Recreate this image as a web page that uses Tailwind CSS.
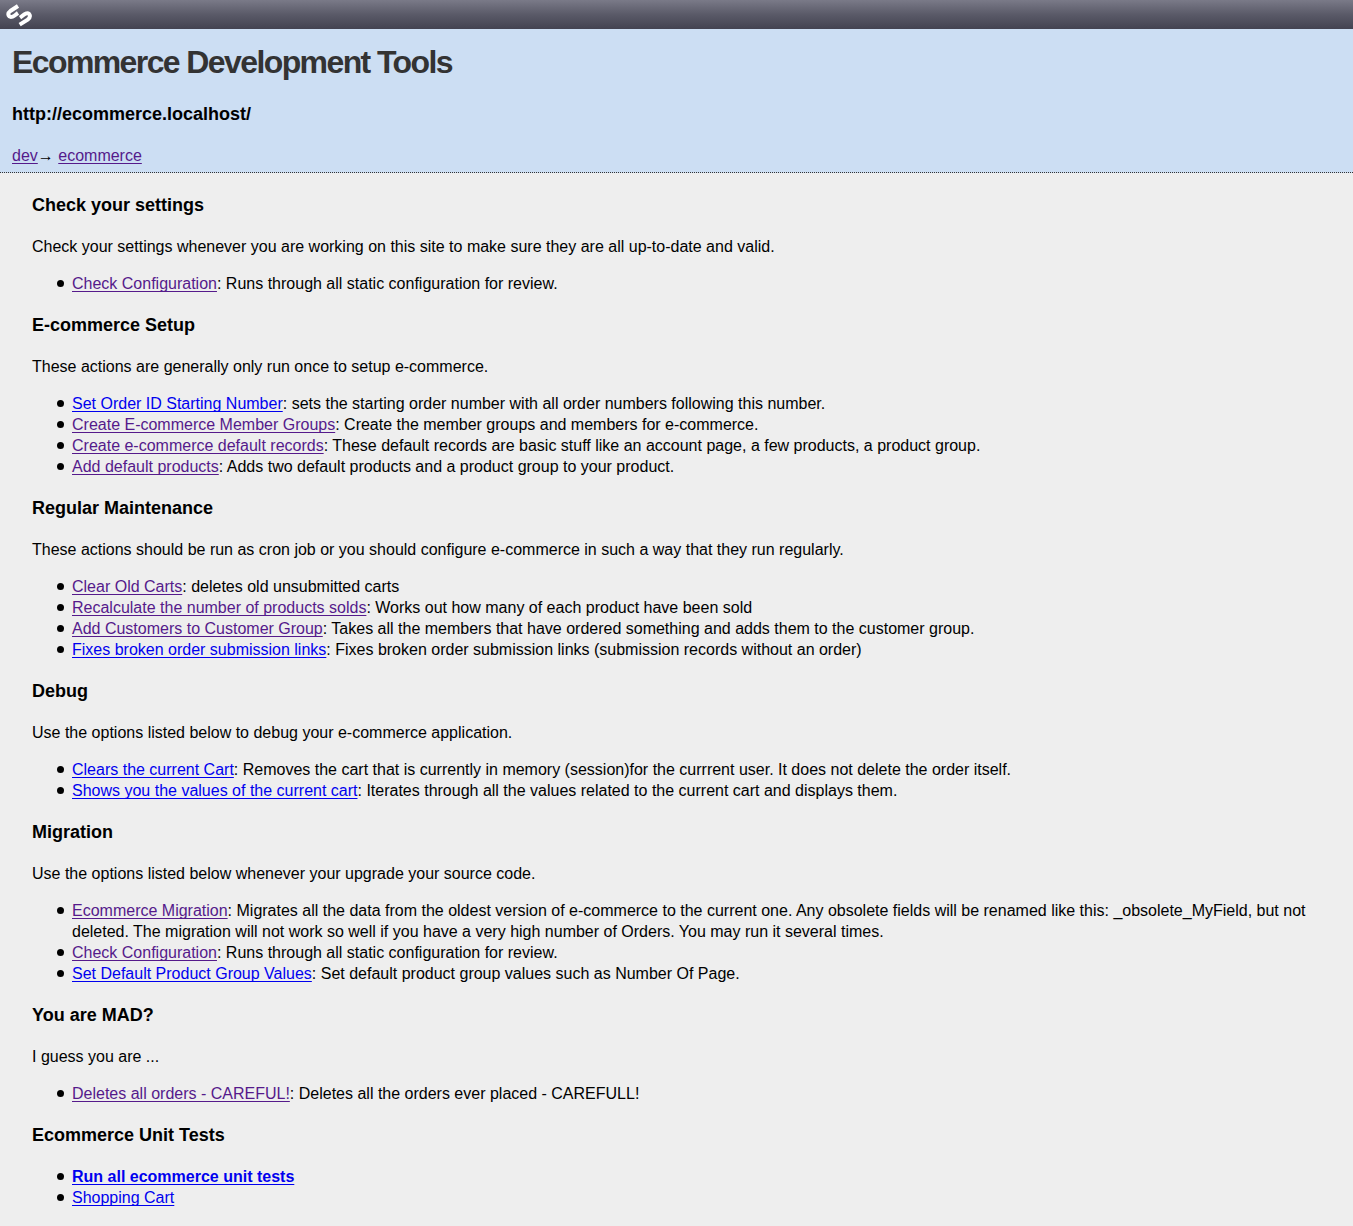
<!DOCTYPE html>
<html lang="en">
<head>
<meta charset="utf-8">
<meta name="viewport" content="width=device-width, initial-scale=1">
<title>Ecommerce Development Tools</title>
<script src="https://cdn.jsdelivr.net/npm/@tailwindcss/browser@4"></script>
</head>
<body class="min-h-screen bg-[#eeeeee] font-['Liberation_Sans',Arial,sans-serif] text-base leading-[21px] text-black [text-decoration-skip-ink:none]">
<div class="flex h-[29px] items-center bg-linear-to-b from-[#7a7a88] via-[#5a5a68] to-[#434351] pl-[6px]">
  <svg class="h-[29px] w-[27px]" viewBox="18 0 81 87" fill="none" stroke="#fff" stroke-width="12" aria-label="SilverStripe">
    <path d="M54 18L31 33C20 41 26 54 38 50C44 48 48 43 54 39"/>
    <path d="M59 74L83 59C95 50 89 36 77 41C71 43 67 48 60 53"/>
  </svg>
</div>
<header class="border-b border-dotted border-[#333333] bg-[#ccdef3] px-3 pt-3 pb-[6px]">
  <h1 class="text-[32px] leading-[42px] font-bold tracking-tighter text-[#333333]">Ecommerce Development Tools</h1>
  <h3 class="my-[19px] text-lg leading-6 font-bold">http://ecommerce.localhost/</h3>
  <p><a href="#" class="text-[#551a8b] underline underline-offset-2">dev</a>→ <a href="#" class="text-[#551a8b] underline underline-offset-2">ecommerce</a></p>
</header>
<main class="flex flex-col gap-[19px] px-8 pt-5 pb-4">
  <section>
    <h3 class="mb-[19px] text-lg leading-6 font-bold">Check your settings</h3>
    <p class="mb-4">Check your settings whenever you are working on this site to make sure they are all up-to-date and valid.</p>
    <ul class="pl-10 *:before:float-left *:before:mt-[7px] *:before:-ml-[15px] *:before:size-[7px] *:before:rounded-full *:before:bg-black *:before:content-['']">
      <li><a href="#" class="text-[#551a8b] underline underline-offset-2">Check Configuration</a>: Runs through all static configuration for review.</li>
    </ul>
  </section>
  <section>
    <h3 class="mb-[19px] text-lg leading-6 font-bold">E-commerce Setup</h3>
    <p class="mb-4">These actions are generally only run once to setup e-commerce.</p>
    <ul class="pl-10 *:before:float-left *:before:mt-[7px] *:before:-ml-[15px] *:before:size-[7px] *:before:rounded-full *:before:bg-black *:before:content-['']">
      <li><a href="#" class="text-[#0000ee] underline underline-offset-2">Set Order ID Starting Number</a>: sets the starting order number with all order numbers following this number.</li>
      <li><a href="#" class="text-[#551a8b] underline underline-offset-2">Create E-commerce Member Groups</a>: Create the member groups and members for e-commerce.</li>
      <li><a href="#" class="text-[#551a8b] underline underline-offset-2">Create e-commerce default records</a>: These default records are basic stuff like an account page, a few products, a product group.</li>
      <li><a href="#" class="text-[#551a8b] underline underline-offset-2">Add default products</a>: Adds two default products and a product group to your product.</li>
    </ul>
  </section>
  <section>
    <h3 class="mb-[19px] text-lg leading-6 font-bold">Regular Maintenance</h3>
    <p class="mb-4">These actions should be run as cron job or you should configure e-commerce in such a way that they run regularly.</p>
    <ul class="pl-10 *:before:float-left *:before:mt-[7px] *:before:-ml-[15px] *:before:size-[7px] *:before:rounded-full *:before:bg-black *:before:content-['']">
      <li><a href="#" class="text-[#551a8b] underline underline-offset-2">Clear Old Carts</a>: deletes old unsubmitted carts</li>
      <li><a href="#" class="text-[#551a8b] underline underline-offset-2">Recalculate the number of products solds</a>: Works out how many of each product have been sold</li>
      <li><a href="#" class="text-[#551a8b] underline underline-offset-2">Add Customers to Customer Group</a>: Takes all the members that have ordered something and adds them to the customer group.</li>
      <li><a href="#" class="text-[#0000ee] underline underline-offset-2">Fixes broken order submission links</a>: Fixes broken order submission links (submission records without an order)</li>
    </ul>
  </section>
  <section>
    <h3 class="mb-[19px] text-lg leading-6 font-bold">Debug</h3>
    <p class="mb-4">Use the options listed below to debug your e-commerce application.</p>
    <ul class="pl-10 *:before:float-left *:before:mt-[7px] *:before:-ml-[15px] *:before:size-[7px] *:before:rounded-full *:before:bg-black *:before:content-['']">
      <li><a href="#" class="text-[#0000ee] underline underline-offset-2">Clears the current Cart</a>: Removes the cart that is currently in memory (session)for the currrent user. It does not delete the order itself.</li>
      <li><a href="#" class="text-[#0000ee] underline underline-offset-2">Shows you the values of the current cart</a>: Iterates through all the values related to the current cart and displays them.</li>
    </ul>
  </section>
  <section>
    <h3 class="mb-[19px] text-lg leading-6 font-bold">Migration</h3>
    <p class="mb-4">Use the options listed below whenever your upgrade your source code.</p>
    <ul class="pl-10 *:before:float-left *:before:mt-[7px] *:before:-ml-[15px] *:before:size-[7px] *:before:rounded-full *:before:bg-black *:before:content-['']">
      <li><a href="#" class="text-[#551a8b] underline underline-offset-2">Ecommerce Migration</a>: Migrates all the data from the oldest version of e-commerce to the current one. Any obsolete fields will be renamed like this: _obsolete_MyField, but not deleted. The migration will not work so well if you have a very high number of Orders. You may run it several times.</li>
      <li><a href="#" class="text-[#551a8b] underline underline-offset-2">Check Configuration</a>: Runs through all static configuration for review.</li>
      <li><a href="#" class="text-[#0000ee] underline underline-offset-2">Set Default Product Group Values</a>: Set default product group values such as Number Of Page.</li>
    </ul>
  </section>
  <section>
    <h3 class="mb-[19px] text-lg leading-6 font-bold">You are MAD?</h3>
    <p class="mb-4">I guess you are ...</p>
    <ul class="pl-10 *:before:float-left *:before:mt-[7px] *:before:-ml-[15px] *:before:size-[7px] *:before:rounded-full *:before:bg-black *:before:content-['']">
      <li><a href="#" class="text-[#551a8b] underline underline-offset-2">Deletes all orders - CAREFUL!</a>: Deletes all the orders ever placed - CAREFULL!</li>
    </ul>
  </section>
  <section>
    <h3 class="mb-[19px] text-lg leading-6 font-bold">Ecommerce Unit Tests</h3>
    <ul class="pl-10 *:before:float-left *:before:mt-[7px] *:before:-ml-[15px] *:before:size-[7px] *:before:rounded-full *:before:bg-black *:before:content-['']">
      <li><a href="#" class="font-bold text-[#0000ee] underline underline-offset-2">Run all ecommerce unit tests</a></li>
      <li><a href="#" class="text-[#0000ee] underline underline-offset-2">Shopping Cart</a></li>
    </ul>
  </section>
</main>
</body>
</html>
